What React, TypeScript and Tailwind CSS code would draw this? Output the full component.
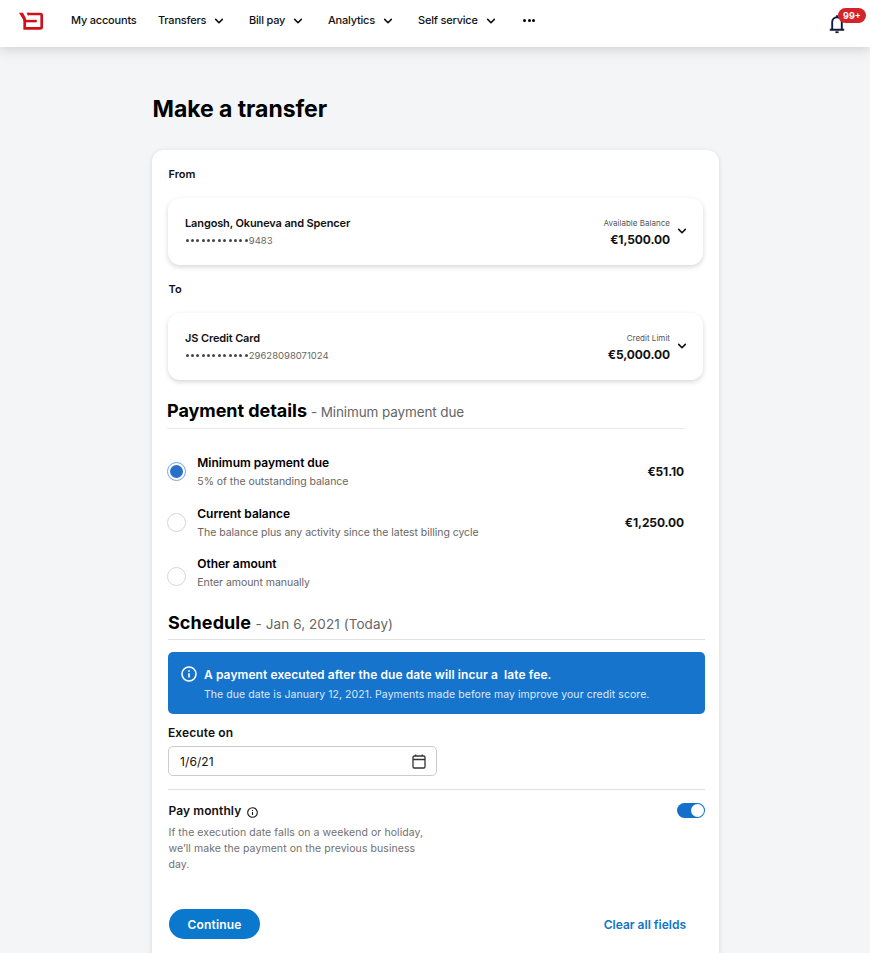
import React from "react";

const Chevron = ({ className = "" }: { className?: string }) => (
  <svg width="10" height="8" viewBox="0 0 10 8" fill="none" className={`shrink-0 ${className}`}>
    <path d="M1.7 2.4 5 5.7 8.3 2.4" stroke="currentColor" strokeWidth="1.6" strokeLinecap="round" strokeLinejoin="round" />
  </svg>
);

const Logo = () => (
  <svg width="25" height="18" viewBox="0 0 25 18" fill="none" className="shrink-0 text-[#cf1219]">
    <path d="M5.700 7.500V16.300H21.300a1.400 1.400 0 0 0 1.400-1.400V3.400a1.400 1.400 0 0 0-1.400-1.400H8.600" stroke="currentColor" strokeWidth="2.700" />
    <path d="M5.700 9.100H17.800" stroke="currentColor" strokeWidth="2.500" />
    <path d="M0 .65H4L7.100 6.800V9H4.350V8Z" fill="currentColor" />
    <path d="M7.500 .65H10V3.350H8.900Z" fill="currentColor" />
  </svg>
);

const InfoIcon = ({ size, stroke }: { size: number; stroke: number }) => (
  <svg width={size} height={size} viewBox="0 0 16 16" fill="none" className="shrink-0">
    <circle cx="8" cy="8" r="7" stroke="currentColor" strokeWidth={stroke} />
    <path d="M8 7.2V11.5M8 4.3V5.8" stroke="currentColor" strokeWidth={stroke} />
  </svg>
);

function Account(props: { name: string; digits: string; label: string; amount: string }) {
  return (
    <div className="mx-4 flex h-[67.5px] items-center rounded-[12px] bg-white pr-4 pl-[17px] shadow-[0_2px_5px_rgba(0,0,0,0.16)]">
      <div className="flex-1">
        <div className="text-[11px] leading-[18px] font-semibold tracking-[-0.13px] text-[#111]">{props.name}</div>
        <div className="flex items-center text-[9.5px] leading-[17px] text-[#666]">
          <span className="mr-px ml-[0.5px] flex gap-[2.4px]">
            {Array.from({ length: 12 }, (_, i) => (
              <span key={i} className="size-[3px] rounded-full bg-[#444]" />
            ))}
          </span>
          {props.digits}
        </div>
      </div>
      <div className="text-right">
        <div className="text-[8px] leading-[16px] tracking-[0.02px] text-[#555]">{props.label}</div>
        <div className="text-[12px] leading-[17px] font-bold tracking-[-0.1px] text-[#111]">{props.amount}</div>
      </div>
      <Chevron className="ml-[7px]" />
    </div>
  );
}

function Option(props: { title: string; note: string; amount?: string; checked?: boolean; low?: boolean }) {
  return (
    <div className="flex h-[50.5px] items-start">
      <span
        className={`flex size-[19px] shrink-0 items-center justify-center rounded-full border ${
          props.checked ? "border-[#76a5e2]" : "border-[#d6d6d6]"
        } ${props.low ? "mt-[12.5px]" : "mt-[9px]"}`}
      >
        {props.checked && <span className="size-[13px] rounded-full bg-[#2a70c8]" />}
      </span>
      <div className="ml-[11px] flex-1">
        <div className="text-[12px] leading-[19px] font-semibold tracking-[-0.03px] text-black">{props.title}</div>
        <div className="text-[10.5px] leading-[19px] tracking-[-0.04px] text-[#666]">{props.note}</div>
      </div>
      <div className="mt-[9px] text-[12px] leading-[19px] font-bold tracking-[-0.12px] text-[#111]">{props.amount}</div>
    </div>
  );
}

export default function App() {
  return (
    <div className="h-[953px] w-full overflow-hidden bg-[#f4f5f7] font-['Inter',sans-serif] text-[#111]">
      <header className="flex h-[47px] items-start bg-white pl-[19px] shadow-[0_2px_12px_rgba(60,70,60,0.22)]">
        <div className="mt-[12px]"><Logo /></div>
        <nav className="mt-[11px] flex text-[11px] leading-[19px] font-medium tracking-[-0.2px]">
          <div className="ml-[27px] w-[87px]">My accounts</div>
          <div className="flex w-[91px] items-center">Transfers<Chevron className="ml-2" /></div>
          <div className="flex w-[79px] items-center">Bill pay<Chevron className="ml-2" /></div>
          <div className="flex w-[90px] items-center">Analytics<Chevron className="ml-2" /></div>
          <div className="flex w-[105px] items-center">Self service<Chevron className="ml-2" /></div>
          <div className="flex items-center gap-[1.5px]">
            <span className="size-[3px] rounded-full bg-black" />
            <span className="size-[3px] rounded-full bg-black" />
            <span className="size-[3px] rounded-full bg-black" />
          </div>
        </nav>
        <div className="relative mt-[14px] mr-[25px] ml-auto">
          <svg width="16" height="20" viewBox="0 0 16 20" fill="none" className="text-[#0f1b3d]">
            <path d="M3.200 15.500V8a4.800 4.800 0 0 1 9.600 0v7.500M.8 15.800H15.200M8 3V1.200" stroke="currentColor" strokeWidth="1.900" />
            <path d="M6.400 18.200h3.200" stroke="currentColor" strokeWidth="1.800" />
          </svg>
          <span className="absolute top-[-6px] left-[9px] h-[15px] w-[28px] rounded-full bg-[#d3242a] text-center text-[9px] leading-[15px] font-bold text-white">99+</span>
        </div>
      </header>

      <main className="ml-[152px] w-[567px]">
        <h1 className="pt-[46px] pl-[0.5px] text-[23px] leading-[32px] font-bold tracking-[-0.05px] text-black">Make a transfer</h1>

        <section className="mt-[25px] flex h-[820px] flex-col rounded-[12px] bg-white shadow-[0_1px_5px_rgba(0,0,0,0.12)]">
          <div className="ml-[16.5px] pt-[14px] text-[11px] leading-[20px] font-semibold">From</div>
          <div className="h-[13.5px]" />
          <Account name="Langosh, Okuneva and Spencer" digits="9483" label="Available Balance" amount="€1,500.00" />
          <div className="mt-[13.5px] mb-[14px] ml-[16.5px] text-[11px] leading-[20px] font-semibold">To</div>
          <Account name="JS Credit Card" digits="29628098071024" label="Credit Limit" amount="€5,000.00" />

          <h2 className="mt-[16px] ml-[15px] flex h-[33px] w-[518px] items-baseline border-b border-[#e8e8e8] text-[18px] leading-[30px] font-bold tracking-[-0.05px] text-black">
            Payment details<span className="ml-[4px] text-[13.5px] font-normal tracking-[-0.11px] text-[#666]">- Minimum payment due</span>
          </h2>

          <div className="mt-[24px] ml-[15px] w-[517px] pl-[0.3px]">
            <Option title="Minimum payment due" note="5% of the outstanding balance" amount="€51.10" checked />
            <Option title="Current balance" note="The balance plus any activity since the latest billing cycle" amount="€1,250.00" />
            <Option title="Other amount" note="Enter amount manually" low />
          </div>

          <div className="ml-4 w-[537px]">
            <h2 className="mt-[3px] flex h-[32px] items-baseline border-b border-[#e2e2e2] text-[18px] leading-[30px] font-bold tracking-[0.08px] text-black">
              Schedule<span className="ml-[4.500px] text-[13.5px] font-normal text-[#666]">- Jan 6, 2021 (Today)</span>
            </h2>

            <div className="mt-[12px] flex h-[62px] rounded-[5px] bg-[#1674cc] pt-[12px] pl-[13px] text-white">
              <div className="mt-[2px]"><InfoIcon size={16} stroke={1.6} /></div>
              <div className="mt-[1px] ml-[7px]">
                <div className="text-[12px] leading-[20px] font-semibold tracking-[0.085px] whitespace-pre">A payment executed after the due date will incur a  late fee.</div>
                <div className="text-[10.5px] leading-[20px] tracking-[0.06px] text-[#dceafa]">The due date is January 12, 2021. Payments made before may improve your credit score.</div>
              </div>
            </div>

            <div className="mt-[9px] text-[12px] leading-[20px] font-semibold tracking-[0.1px]">Execute on</div>
            <div className="mt-[3px] flex h-[30px] w-[269px] items-center justify-between rounded-[5px] border border-[#ccc] pr-[10px] pl-[11px] text-[12px] tracking-[0.1px]">
              <span className="pt-[2px]">1/6/21</span>
              <svg width="14" height="15" viewBox="0 0 14 15" fill="none" stroke="#333" strokeWidth="1.300" className="mt-[1px]">
                <rect x="1" y="2" width="12" height="12" rx="1.200" />
                <path d="M1 5.500H13M3.700 .5V2M10.300 .5V2" />
              </svg>
            </div>

            <div className="mt-[13px] flex justify-between border-t border-[#e2e2e2] pt-[11px]">
              <div className="flex items-center pl-[0.5px] text-[12px] leading-[20px] font-semibold tracking-[0.1px]">
                Pay monthly
                <span className="mt-[3px] ml-[6px]"><InfoIcon size={11} stroke={1.6} /></span>
              </div>
              <span className="mt-[2px] flex h-[15.500px] w-[28px] items-center justify-end rounded-full bg-[#1370ca] pr-[1px]">
                <span className="size-[13px] rounded-full bg-white" />
              </span>
            </div>
            <p className="mt-[4px] w-[270px] pl-[0.5px] text-[10.5px] leading-[16px] tracking-[0.07px] text-[#707070]">
              If the execution date falls on a weekend or holiday,<br />we’ll make the payment on the previous business<br />day.
            </p>

            <div className="mt-[36px] flex items-center justify-between pr-[19px] pl-px">
              <button className="h-[30px] w-[91px] rounded-full bg-[#0a78cc] pt-[2px] text-[12px] font-semibold tracking-[0.15px] text-white">Continue</button>
              <button className="pt-[2px] text-[12px] font-semibold text-[#0f75c7]">Clear all fields</button>
            </div>
          </div>
        </section>
      </main>
    </div>
  );
}
